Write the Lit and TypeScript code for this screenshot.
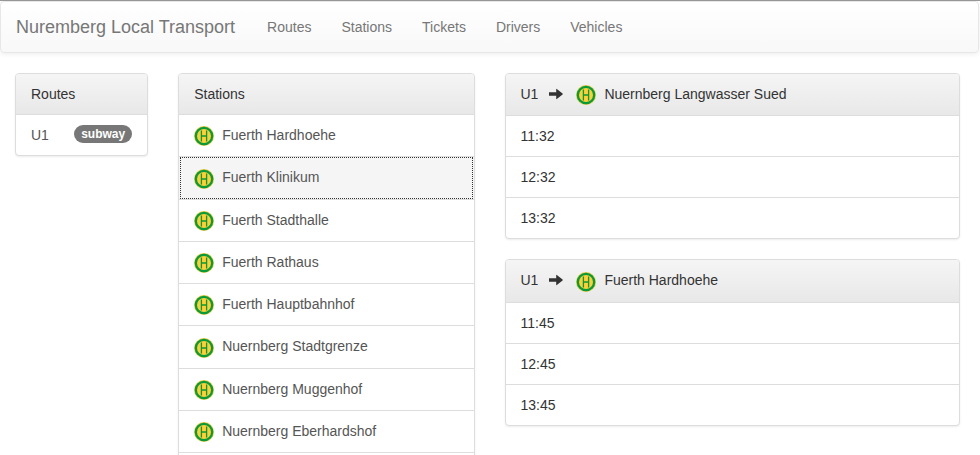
import { LitElement, html, css, svg } from "lit";
import { customElement, state } from "lit/decorators.js";

const stopIcon = html`<svg class="stop" viewBox="0 0 20 20" width="20" height="20" aria-hidden="true">
  ${svg`<circle cx="10" cy="10" r="10" fill="#e3c93c"/>
  <circle cx="10" cy="10" r="9.3" fill="#0a9a3a"/>
  <circle cx="10" cy="10" r="7" fill="#fdcf38"/>
  <path d="M7.4 4.4V15.6M12.6 4.4V15.6M7.4 10H12.6" fill="none" stroke="#0a9a3a" stroke-width="1.3"/>`}
</svg>`;

const arrowIcon = html`<svg class="arrow" viewBox="0 0 14 14" width="14" height="14" role="img" aria-label="to">
  <path d="M0 5.2H7.2V2.2Q7.2 1.6 7.8 2L13.6 6.6Q14 7 13.6 7.4L7.8 12Q7.2 12.4 7.2 11.8V8.8H0Z" fill="#333"/>
</svg>`;

const boxes = css`
  :host {
    display: block;
  }
  .panel {
    margin-bottom: 20px;
    background: #fff;
    border: 1px solid #ddd;
    border-radius: 4px;
    box-shadow: 0 1px 2px rgba(0, 0, 0, 0.08);
  }
  .heading {
    margin: 0;
    padding: 10px 15px;
    font-size: 14px;
    font-weight: 400;
    line-height: 20px;
    color: #333;
    border-bottom: 1px solid #ddd;
    border-radius: 3px 3px 0 0;
    background: linear-gradient(#f5f5f5, #e8e8e8);
  }
  .list {
    list-style: none;
    margin: 0;
    padding: 0;
  }
  .item {
    display: block;
    padding: 10px 15px;
    margin-bottom: -1px;
    border: solid #ddd;
    border-width: 1px 0;
    color: #333;
    text-decoration: none;
  }
  a.item {
    color: #555;
  }
  .list > :first-child .item,
  .list > .item:first-child {
    border-top: 0;
  }
  .list > :last-child .item,
  .list > .item:last-child {
    border-bottom: 0;
    margin-bottom: 0;
  }
  .stop {
    vertical-align: middle;
    margin-right: 8px;
  }
`;

@customElement("nav-bar")
class NavBar extends LitElement {
  static styles = css`
    :host {
      display: block;
    }
    .bar {
      display: flex;
      flex-wrap: wrap;
      min-height: 50px;
      margin-bottom: 20px;
      border: 1px solid #e7e7e7;
      border-radius: 4px;
      background: linear-gradient(#fff, #f8f8f8);
      box-shadow: 0 1px 5px rgba(0, 0, 0, 0.08);
    }
    a {
      display: block;
      padding: 15px;
      line-height: 20px;
      color: #777;
      text-decoration: none;
    }
    a:hover {
      color: #333;
    }
    .brand {
      font-size: 18px;
    }
    .links {
      display: flex;
      flex-wrap: wrap;
      list-style: none;
      margin: 0 0 0 2px;
      padding: 0;
    }
  `;

  render() {
    const links = ["Routes", "Stations", "Tickets", "Drivers", "Vehicles"];
    return html`<nav class="bar">
      <a class="brand" href="#">Nuremberg Local Transport</a>
      <ul class="links">
        ${links.map((l) => html`<li><a href="#${l.toLowerCase()}">${l}</a></li>`)}
      </ul>
    </nav>`;
  }
}

@customElement("route-list")
class RouteList extends LitElement {
  static styles = [
    boxes,
    css`
      .route {
        display: flex;
        justify-content: space-between;
        align-items: center;
      }
      .badge {
        padding: 3px 7px;
        margin: 0 0 2px;
        border-radius: 10px;
        background: #777;
        color: #fff;
        font-size: 12px;
        font-weight: 700;
        line-height: 12px;
      }
    `,
  ];

  render() {
    return html`<section class="panel">
      <h2 class="heading">Routes</h2>
      <ul class="list">
        <li><a class="item route" href="#u1">U1<span class="badge">subway</span></a></li>
      </ul>
    </section>`;
  }
}

@customElement("station-list")
class StationList extends LitElement {
  static styles = [
    boxes,
    css`
      .panel {
        padding-bottom: 20px;
      }
      .list > :last-child .item {
        border-bottom: 1px solid #ddd;
      }
      .item:hover,
      .item.selected {
        background: #f5f5f5;
      }
      .item.selected {
        outline: 1px dotted #333;
        outline-offset: -2px;
      }
    `,
  ];

  @state() selected = 1;

  render() {
    const stations = [
      "Fuerth Hardhoehe",
      "Fuerth Klinikum",
      "Fuerth Stadthalle",
      "Fuerth Rathaus",
      "Fuerth Hauptbahnhof",
      "Nuernberg Stadtgrenze",
      "Nuernberg Muggenhof",
      "Nuernberg Eberhardshof",
    ];
    return html`<section class="panel">
      <h2 class="heading">Stations</h2>
      <ul class="list">
        ${stations.map(
          (name, i) => html`<li>
            <a
              class="item ${i === this.selected ? "selected" : ""}"
              href="#station-${i + 1}"
              @click=${() => (this.selected = i)}
              >${stopIcon}${name}</a
            >
          </li>`
        )}
      </ul>
    </section>`;
  }
}

@customElement("departure-list")
class DepartureList extends LitElement {
  static styles = [
    boxes,
    css`
      .arrow {
        vertical-align: -2px;
        margin: 0 13px 0 11px;
      }
    `,
  ];

  render() {
    const boards = [
      { route: "U1", to: "Nuernberg Langwasser Sued", times: ["11:32", "12:32", "13:32"] },
      { route: "U1", to: "Fuerth Hardhoehe", times: ["11:45", "12:45", "13:45"] },
    ];
    return boards.map(
      (b) => html`<section class="panel">
        <h2 class="heading">${b.route}${arrowIcon}${stopIcon}${b.to}</h2>
        <ul class="list">
          ${b.times.map((t) => html`<li class="item">${t}</li>`)}
        </ul>
      </section>`
    );
  }
}

@customElement("app-root")
class AppRoot extends LitElement {
  static styles = css`
    :host {
      display: block;
      border-top: 1px solid #999;
      background: #fff;
      color: #333;
      font-family: "Liberation Sans", Arial, sans-serif;
      font-size: 14px;
      line-height: 20px;
    }
    .page {
      margin-right: 1px;
    }
    .columns {
      display: grid;
      grid-template-columns: minmax(0, 2fr) minmax(0, 4fr) minmax(0, 6fr);
    }
    .column {
      padding: 0 15px;
    }
    .departures {
      padding-right: 19px;
    }
  `;

  render() {
    return html`<div class="page">
      <nav-bar></nav-bar>
      <main class="columns">
        <route-list class="column"></route-list>
        <station-list class="column"></station-list>
        <departure-list class="column departures"></departure-list>
      </main>
    </div>`;
  }
}
